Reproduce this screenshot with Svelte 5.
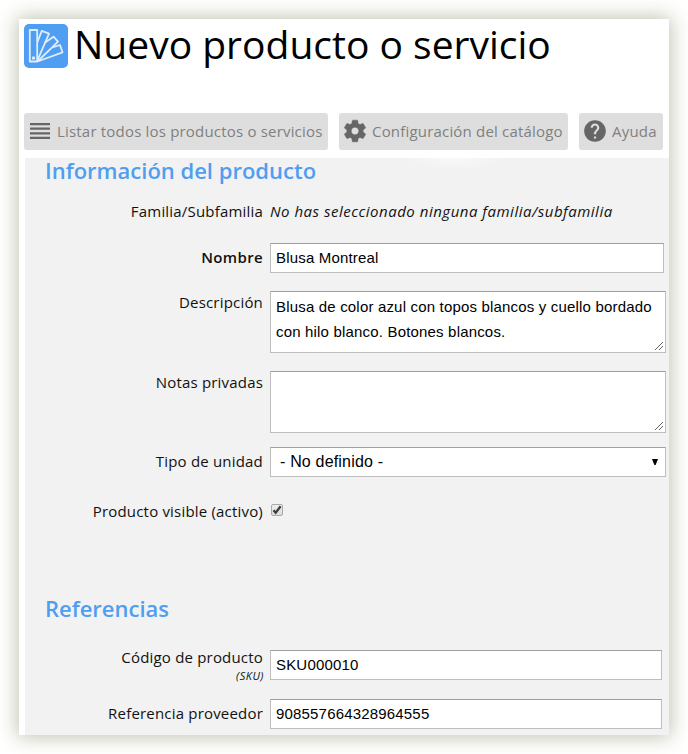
<script>
  let product = $state({
    name: "Blusa Montreal",
    description: "Blusa de color azul con topos blancos y cuello bordado con hilo blanco. Botones blancos.",
    notes: "",
    unit: "none",
    visible: true,
    sku: "SKU000010",
    supplierRef: "908557664328964555",
  });
</script>

<main class="card">
  <header>
    <svg class="logo" width="44" height="44" viewBox="0 0 44 44" fill="none" stroke="#deedfe" stroke-width="1.8" stroke-linejoin="round">
      <rect width="44" height="44" rx="5" fill="#4f9ef1" stroke="none" />
      <path d="M5.800 6h7.400v31.500H5.800z" />
      <path d="M13.400 18L17.800 6.800L25 9.600L13.600 36" />
      <path d="M20.500 19L29.500 12.700L34 17.600L14 37" />
      <path d="M28.500 23.500L36 21L38.500 28.300L13.500 37.500" />
      <circle cx="9.500" cy="34" r="0.800" />
    </svg>
    <h1>Nuevo producto o servicio</h1>
  </header>

  <nav>
    <button class="list">
      <svg width="20" height="16" viewBox="0 0 20 16" fill="#666">
        <path d="M0 0h20v2.200H0zM0 4.600h20v2.200H0zM0 9.200h20v2.200H0zM0 13.800h20v2.200H0z" />
      </svg>
      <span>Listar todos los productos o servicios</span>
    </button>
    <button class="config">
      <svg width="26" height="26" viewBox="0 0 24 24" fill="#666">
        <path d="M19.430 12.980c.04-.32.070-.64.070-.98s-.03-.66-.07-.98l2.110-1.650c.19-.15.240-.42.120-.64l-2-3.460c-.12-.22-.39-.3-.61-.22l-2.490 1c-.52-.4-1.080-.73-1.690-.98l-.38-2.650C14.460 2.180 14.250 2 14 2h-4c-.25 0-.46.180-.49.420l-.38 2.650c-.61.250-1.170.590-1.690.980l-2.490-1c-.23-.09-.49 0-.61.220l-2 3.460c-.13.220-.07.490.12.640l2.110 1.650c-.04.32-.07.650-.07.980s.03.660.070.980l-2.110 1.650c-.19.150-.24.420-.12.640l2 3.460c.12.220.39.300.61.220l2.490-1c.52.400 1.080.730 1.690.980l.38 2.650c.03.240.24.420.49.420h4c.25 0 .46-.18.490-.42l.38-2.650c.61-.25 1.170-.59 1.690-.98l2.490 1c.23.090.49 0 .61-.22l2-3.460c.12-.22.070-.49-.12-.64l-2.110-1.650zM12 15.500c-1.930 0-3.500-1.570-3.500-3.500s1.570-3.500 3.500-3.500 3.500 1.570 3.500 3.500-1.570 3.500-3.500 3.500z" stroke="#666" stroke-width="0.500" />
      </svg>
      <span>Configuración del catálogo</span>
    </button>
    <button class="help">
      <svg width="26" height="26" viewBox="0 0 24 24" fill="#666">
        <path d="M12 2C6.480 2 2 6.480 2 12s4.480 10 10 10 10-4.480 10-10S17.520 2 12 2zm1 17h-2v-2h2v2zm2.070-7.750l-.9.920C13.450 12.900 13 13.500 13 15h-2v-.5c0-1.100.45-2.100 1.170-2.830l1.240-1.260c.37-.36.590-.86.590-1.410 0-1.100-.9-2-2-2s-2 .9-2 2H8c0-2.210 1.790-4 4-4s4 1.790 4 4c0 .88-.36 1.680-.93 2.250z" />
      </svg>
      <span>Ayuda</span>
    </button>
  </nav>

  <form>
    <h2>Información del producto</h2>

    <div class="row family">
      <span class="label">Familia/Subfamilia</span>
      <em>No has seleccionado ninguna familia/subfamilia</em>
    </div>
    <div class="row name">
      <label class="label" for="name"><b>Nombre</b></label>
      <input id="name" type="text" bind:value={product.name} />
    </div>
    <div class="row area">
      <label class="label" for="description">Descripción</label>
      <div class="area-box">
        <textarea id="description" bind:value={product.description}></textarea>
        <svg class="grip" width="8" height="8" viewBox="0 0 8 8" stroke="#555" stroke-width="0.9"><path d="M0 8L8 0M4 8L8 4" /></svg>
      </div>
    </div>
    <div class="row area">
      <label class="label" for="notes">Notas privadas</label>
      <div class="area-box">
        <textarea id="notes" bind:value={product.notes}></textarea>
        <svg class="grip" width="8" height="8" viewBox="0 0 8 8" stroke="#555" stroke-width="0.9"><path d="M0 8L8 0M4 8L8 4" /></svg>
      </div>
    </div>
    <div class="row unit">
      <label class="label" for="unit">Tipo de unidad</label>
      <div class="select-box">
        <select id="unit" bind:value={product.unit}>
          <option value="none">- No definido -</option>
        </select>
        <svg class="arrow" width="6" height="6" viewBox="0 0 6 6"><path d="M0 0h6L3.600 6H2.400z" /></svg>
      </div>
    </div>
    <div class="row visible">
      <label class="label" for="visible">Producto visible (activo)</label>
      <input id="visible" type="checkbox" bind:checked={product.visible} />
      {#if product.visible}
        <svg class="tick" width="12" height="12" viewBox="0 0 12 12" fill="none" stroke="#3c3c3c" stroke-width="2.300"><path d="M2.500 6.300L4.700 8.800L9.600 2.300" /></svg>
      {/if}
    </div>

    <h2 class="refs">Referencias</h2>

    <div class="row ref">
      <label class="label" for="sku">Código de producto <small>(SKU)</small></label>
      <input id="sku" type="text" bind:value={product.sku} />
    </div>
    <div class="row ref supplier">
      <label class="label" for="supplier">Referencia proveedor</label>
      <input id="supplier" type="text" bind:value={product.supplierRef} />
    </div>
  </form>
</main>

<style>
  :global(body) {
    background: #fff;
    overflow: hidden;
  }

  .card {
    box-sizing: border-box;
    width: 650px;
    height: 716px;
    margin: 19px;
    padding: 5px 0 0 5px;
    background: #fff;
    box-shadow: 0 0 19px 2px #c2c3b0;
    font-family: "Open Sans", sans-serif;
    color: #111;
  }

  header {
    display: flex;
    align-items: flex-start;
    height: 89px;
  }

  .logo {
    flex: none;
  }

  h1 {
    margin: -7px 0 0 6px;
    color: #000;
    font-size: 39px;
    font-weight: 400;
    line-height: 54px;
    white-space: nowrap;
  }

  nav {
    display: flex;
    gap: 11px;
  }

  nav button {
    box-sizing: border-box;
    display: flex;
    align-items: center;
    height: 37px;
    padding: 0;
    border: 0;
    border-radius: 3px;
    background: #dedede;
    color: #808080;
    font: 15px "Open Sans", sans-serif;
    letter-spacing: 0.19px;
    white-space: nowrap;
  }

  nav svg {
    flex: none;
    margin-top: -1px;
  }

  nav span {
    margin-top: -2px;
  }

  .list {
    width: 304px;
    padding-left: 6px;
    gap: 7px;
  }

  .config {
    width: 229px;
    padding-left: 3px;
    gap: 4px;
  }

  .help {
    width: 84px;
    padding-left: 3px;
    gap: 4px;
  }

  form {
    height: 577px;
    margin: 8px 0 0 1px;
    background: radial-gradient(ellipse 48px 12px at 429px 0, #f9f9f9, #f2f2f2) no-repeat #f2f2f2;
  }

  h2 {
    height: 26px;
    margin: 0 0 0 20px;
    color: #4f9ef1;
    font-size: 22px;
    font-weight: 600;
    line-height: 24px;
  }

  .refs {
    margin-top: 73px;
    margin-bottom: 28px;
  }

  .row {
    display: flex;
    align-items: flex-start;
    font-size: 15px;
    line-height: 24px;
  }

  .label {
    flex: none;
    width: 238px;
    margin-right: 7px;
    text-align: right;
    letter-spacing: 0.19px;
    white-space: nowrap;
  }

  em {
    letter-spacing: 0.51px;
  }

  b {
    font-weight: 600;
    letter-spacing: 0.35px;
  }

  small {
    display: block;
    margin: 5px -1px 0 0;
    font-size: 11px;
    font-style: italic;
    letter-spacing: 0.5px;
    line-height: 14px;
  }

  input[type="text"],
  textarea,
  select {
    box-sizing: border-box;
    display: block;
    height: 30px;
    margin: 0;
    padding: 0 5px 2px;
    border: 1px solid #bebebe;
    border-top-color: #a0a0a0;
    border-radius: 0;
    outline: 0;
    background: #fff;
    color: #000;
    font: 15px "Liberation Sans", Arial, sans-serif;
    letter-spacing: 0.18px;
  }

  .family {
    margin-top: 15px;
    height: 44px;
  }

  .name {
    height: 48px;
  }

  .name .label {
    line-height: 29px;
  }

  .name input {
    width: 394px;
  }

  .area {
    height: 80px;
  }

  .area .label {
    line-height: 22px;
  }

  .area-box,
  .select-box {
    position: relative;
    width: 396px;
  }

  .area textarea {
    width: 396px;
    height: 62px;
    padding: 2px 5px;
    line-height: 25px;
    resize: none;
    overflow: hidden;
  }

  .grip {
    position: absolute;
    right: 3px;
    bottom: 3px;
  }

  .unit {
    height: 52px;
    margin-top: -4px;
  }

  .unit .label {
    line-height: 28px;
  }

  .unit select {
    width: 396px;
    padding: 0 9px 2px;
    font-size: 16px;
    appearance: none;
  }

  .arrow {
    position: absolute;
    top: 12px;
    right: 8px;
  }

  .visible {
    position: relative;
    height: 24px;
  }

  .visible input {
    appearance: none;
    box-sizing: border-box;
    width: 12px;
    height: 12px;
    margin: 5px 0 0 1px;
    border: 1px solid #aaa;
    border-radius: 2px;
    background: linear-gradient(#eee, #dcdcdc);
  }

  .tick {
    position: absolute;
    top: 5px;
    left: 246px;
    pointer-events: none;
  }

  .ref {
    height: 49px;
  }

  .ref .label {
    line-height: 14px;
  }

  .ref input {
    width: 392px;
  }

  .supplier .label {
    line-height: 29px;
  }
</style>
